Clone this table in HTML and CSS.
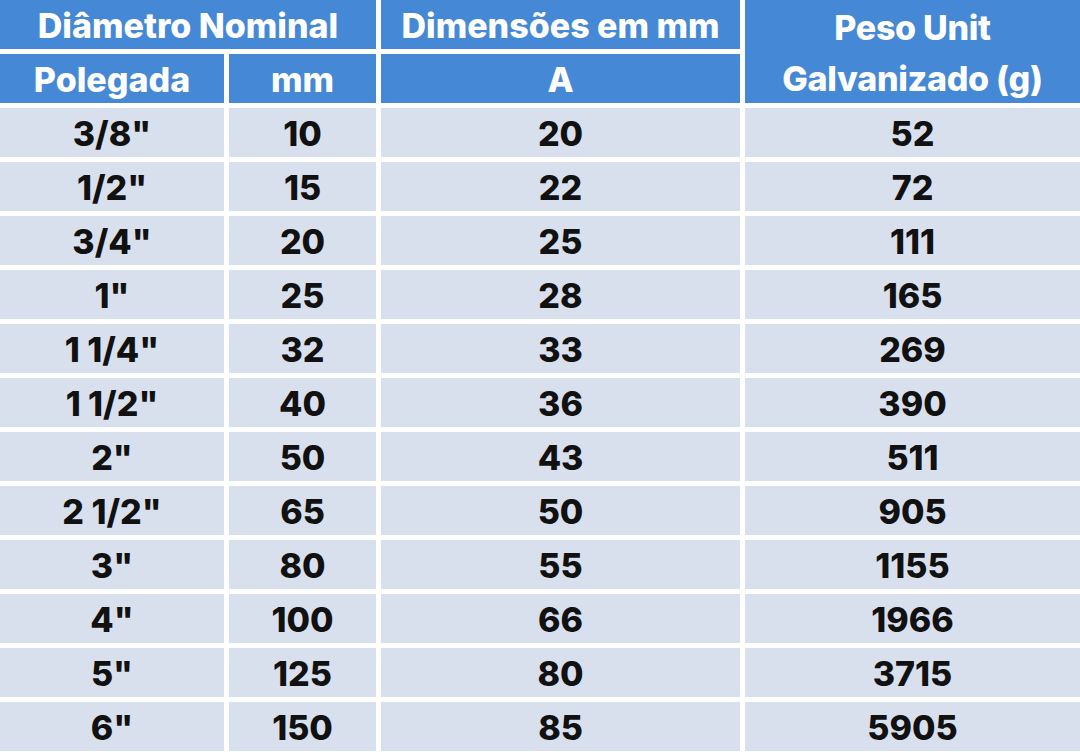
FILE: index.html
```html
<!DOCTYPE html>
<html lang="pt">
<head>
<meta charset="utf-8">
<title>Tabela</title>
<link rel="stylesheet" href="styles.css">
</head>
<body>
<div class="table">
  <div class="cell head span-c2">Diâmetro Nominal</div>
  <div class="cell head">Dimensões em mm</div>
  <div class="cell head span-r2 two-line">Peso Unit<br>Galvanizado (g)</div>
  <div class="cell head">Polegada</div>
  <div class="cell head">mm</div>
  <div class="cell head">A</div>

  <div class="cell">3/8"</div><div class="cell">10</div><div class="cell">20</div><div class="cell">52</div>
  <div class="cell">1/2"</div><div class="cell">15</div><div class="cell">22</div><div class="cell">72</div>
  <div class="cell">3/4"</div><div class="cell">20</div><div class="cell">25</div><div class="cell">111</div>
  <div class="cell">1"</div><div class="cell">25</div><div class="cell">28</div><div class="cell">165</div>
  <div class="cell">1 1/4"</div><div class="cell">32</div><div class="cell">33</div><div class="cell">269</div>
  <div class="cell">1 1/2"</div><div class="cell">40</div><div class="cell">36</div><div class="cell">390</div>
  <div class="cell">2"</div><div class="cell">50</div><div class="cell">43</div><div class="cell">511</div>
  <div class="cell">2 1/2"</div><div class="cell">65</div><div class="cell">50</div><div class="cell">905</div>
  <div class="cell">3"</div><div class="cell">80</div><div class="cell">55</div><div class="cell">1155</div>
  <div class="cell">4"</div><div class="cell">100</div><div class="cell">66</div><div class="cell">1966</div>
  <div class="cell">5"</div><div class="cell">125</div><div class="cell">80</div><div class="cell">3715</div>
  <div class="cell">6"</div><div class="cell">150</div><div class="cell">85</div><div class="cell">5905</div>
</div>
</body>
</html>
```

FILE: styles.css
```css
html, body {
  margin: 0;
  padding: 0;
  background: #ffffff;
}
body {
  width: 1080px;
  height: 754px;
  overflow: hidden;
  font-family: "Inter", "Liberation Sans", sans-serif;
}
.table {
  display: grid;
  grid-template-columns: 224px 147px 359px 335px;
  grid-auto-rows: 49px;
  column-gap: 5px;
  row-gap: 5px;
}
.cell {
  display: flex;
  align-items: center;
  justify-content: center;
  background: #d9e0ed;
  color: #111111;
  font-weight: 800;
  font-size: 34px;
  letter-spacing: 0;
  padding-top: 2px;
  box-sizing: border-box;
  white-space: nowrap;
}
.head {
  background: #4589d6;
  color: #ffffff;
}
.span-c2 {
  grid-column: span 2;
}
.span-r2 {
  grid-row: span 2;
}
.two-line {
  text-align: center;
  line-height: 51px;
  letter-spacing: -0.3px;
}
```
